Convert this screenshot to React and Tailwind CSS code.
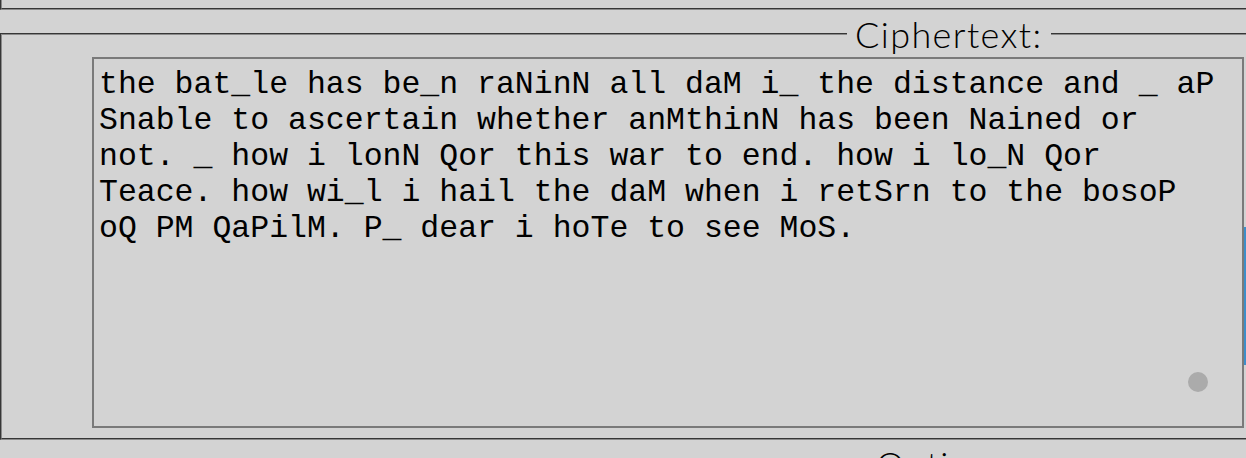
import React from "react";

const cipher =
  "the bat_le has be_n raNinN all daM i_ the distance and _ aP Snable to ascertain whether anMthinN has been Nained or not. _ how i lonN Qor this war to end. how i lo_N Qor Teace. how wi_l i hail the daM when i retSrn to the bosoP oQ PM QaPilM. P_ dear i hoTe to see MoS.";

const legendFont = { fontFamily: "Lato, 'Noto Sans', sans-serif" };

function App() {
  return (
    <div className="relative w-[1246px] h-[458px] overflow-hidden bg-[#d3d3d3]">
      {/* end of the panel above */}
      <div className="w-[1400px] h-[10px] border-l-2 border-b-2 border-[#8a8a8a] [border-style:groove]" />

      {/* Ciphertext */}
      <fieldset className="mt-[6px] w-[1400px] border-2 border-[#8a8a8a] [border-style:groove] pl-[90px] pb-[10px]">
        <legend
          className="ml-[755px] px-[8px] text-[36px] leading-[36px] tracking-[1.4px] font-light text-black"
          style={legendFont}
        >
          Ciphertext:
        </legend>
        <div className="relative w-[1152px] h-[371px] mt-[5px]">
          <textarea
            readOnly
            value={cipher}
            className="block w-full h-full resize-none bg-transparent border-2 border-[#7a7a7a] pl-[5px] pr-[18px] pt-[8px] text-[31.5px] leading-[36px] text-black outline-none"
            style={{ fontFamily: "'Liberation Mono', 'Courier New', monospace" }}
          />
          <div className="absolute left-[1096px] top-[315px] w-[20px] h-[20px] rounded-full bg-[#ababab]" />
        </div>
      </fieldset>

      {/* Options */}
      <fieldset className="mt-[6px] w-[1400px] border-2 border-[#8a8a8a] [border-style:groove]">
        <legend
          className="ml-[866px] px-[8px] text-[36px] leading-[36px] tracking-[1.4px] font-light text-black"
          style={legendFont}
        >
          Options
        </legend>
      </fieldset>

      <div className="absolute left-[1244px] top-[227px] w-[2px] h-[138px] bg-[#3d8ec9]" />
    </div>
  );
}

export default App;
